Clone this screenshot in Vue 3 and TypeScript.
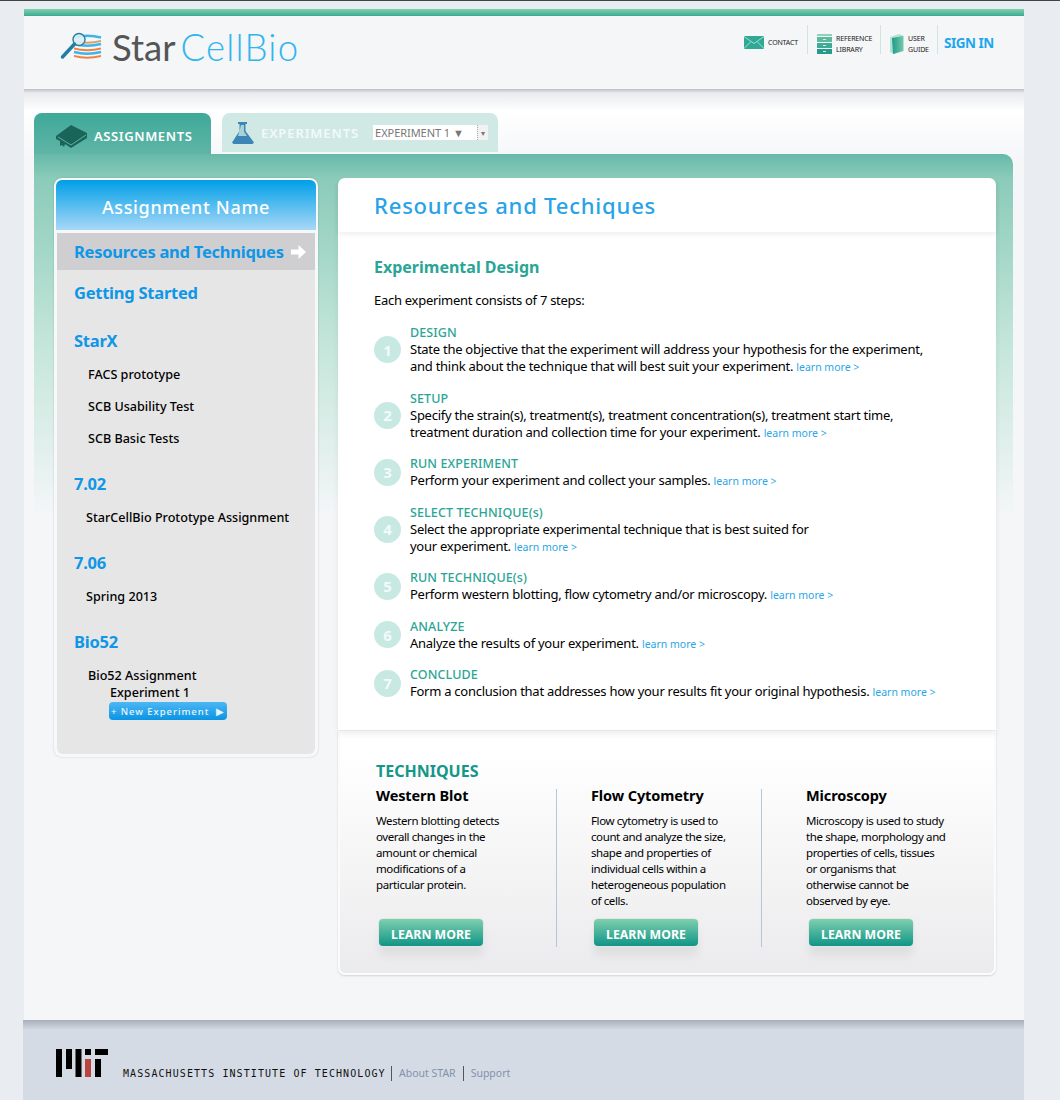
<script setup lang="ts">
type Step = { title: string; lines: string[]; }
type Technique = { name: string; text: string[] }

const steps: Step[] = [
	{ title: 'DESIGN', lines: ['State the objective that the experiment will address your hypothesis for the experiment,', 'and think about the technique that will best suit your experiment.'] },
	{ title: 'SETUP', lines: ['Specify the strain(s), treatment(s), treatment concentration(s), treatment start time,', 'treatment duration and collection time for your experiment.'] },
	{ title: 'RUN EXPERIMENT', lines: ['Perform your experiment and collect your samples.'] },
	{ title: 'SELECT TECHNIQUE(s)', lines: ['Select the appropriate experimental technique that is best suited for', 'your experiment.'] },
	{ title: 'RUN TECHNIQUE(s)', lines: ['Perform western blotting, flow cytometry and/or microscopy.'] },
	{ title: 'ANALYZE', lines: ['Analyze the results of your experiment.'] },
	{ title: 'CONCLUDE', lines: ['Form a conclusion that addresses how your results fit your original hypothesis.'] },
]

const techniques: Technique[] = [
	{ name: 'Western Blot', text: ['Western blotting detects', 'overall changes in the', 'amount or chemical', 'modifications of a', 'particular protein.'] },
	{ name: 'Flow Cytometry', text: ['Flow cytometry is used to', 'count and analyze the size,', 'shape and properties of', 'individual cells within a', 'heterogeneous population', 'of cells.'] },
	{ name: 'Microscopy', text: ['Microscopy is used to study', 'the shape, morphology and', 'properties of cells, tissues', 'or organisms that', 'otherwise cannot be', 'observed by eye.'] },
]
</script>

<template>
	<div class="topline"></div>
	<div class="page">
		<div class="greenbar"></div>
		<header class="header">
			<div class="logo">
				<svg class="logo-icon" width="42" height="30" viewBox="0 0 42 30">
					<g fill="none" stroke-width="2.4">
						<path d="M14 5.500Q27 2 41 5.500" stroke="#3fb4e8" />
						<path d="M14 8q13 3.500 27 0v2q-14 3.500-27 0Z" fill="#d8a06c" stroke="none" />
						<path d="M14 12q13 3.500 27 0" stroke="#3fb4e8" />
						<path d="M14 15.500q13 3.500 27 0v2q-14 3.500-27 0Z" fill="#ee8440" stroke="none" />
						<path d="M14 20q13 3.500 27 0" stroke="#3fb4e8" />
						<path d="M14 23q13 3.500 27 0v2q-14 3.500-27 0Z" fill="#ee8440" stroke="none" />
					</g>
					<circle cx="19" cy="7.500" r="6" fill="#dcf0f6" fill-opacity=".9" stroke="#2b7f9e" stroke-width="1.400" />
					<path d="M14.500 12 2.500 25" stroke="#1f7ea3" stroke-width="3.400" stroke-linecap="round" />
				</svg>
				<span class="logo-star">Star</span><span class="logo-cell">CellBio</span>
			</div>
			<nav class="topnav">
				<a class="navitem contact">
					<svg width="20" height="13" viewBox="0 0 20 13">
						<rect width="20" height="13" rx="1" fill="#2fa896" />
						<path d="M0 0.500 10 7.500 20 0.500M0 12.500 7 5.500M20 12.500 13 5.500" fill="none" stroke="#a8dccb" stroke-width="1" />
					</svg>
					<span>CONTACT</span>
				</a>
				<a class="navitem reference">
					<svg width="15" height="20" viewBox="0 0 15 20">
						<rect y="0" width="15" height="2" fill="#8fd0b8" />
						<rect y="3" width="15" height="5" fill="#5cba9f" />
						<rect y="9" width="15" height="5" fill="#3dab95" />
						<rect y="15" width="15" height="5" fill="#249c8b" />
						<path d="M6 5.500h3M6 11.500h3M6 17.500h3" stroke="#d4eee4" stroke-width="1" />
					</svg>
					<span>REFERENCE<br />LIBRARY</span>
				</a>
				<a class="navitem guide">
					<svg width="14" height="20" viewBox="0 0 14 20">
						<defs>
							<linearGradient id="cover" x1="0" y1="0" x2="1" y2="0">
								<stop offset="0" stop-color="#1f9a88" />
								<stop offset="1" stop-color="#72c7ab" />
							</linearGradient>
						</defs>
						<path d="M0 3 9 0 14 2V17L4 20 0 18Z" fill="#b4e2d2" />
						<path d="M2 4 13 2V17L3 20Z" fill="url(#cover)" />
					</svg>
					<span>USER<br />GUIDE</span>
				</a>
				<a class="signin">SIGN IN</a>
			</nav>
		</header>

		<main class="content">
			<div class="tabs">
				<div class="tab tab-active">
					<svg width="32" height="24" viewBox="0 0 32 24">
						<path d="M0 12 15 1 31 9V14L15 24 9 20 8 23 6 21 4 22V17L0 15Z" fill="#1b6459" />
						<path d="M2 13 15 21 30 11" fill="none" stroke="#5fb0a2" stroke-width="1" />
					</svg>
					<span>ASSIGNMENTS</span>
				</div>
				<div class="tab tab-other">
					<svg width="22" height="22" viewBox="0 0 22 22">
						<path d="M6 0h9v2h-1.500v7L22 20.500 20.500 22H1.500L0 20.500 7.500 9V2H6Z" fill="#3b86b5" />
						<path d="M9 3h3v6.500L15 14H6Z" fill="#d0e9e4" opacity=".75" />
					</svg>
					<span class="tab-label">EXPERIMENTS</span>
					<div class="picker">
						<span class="picker-value">EXPERIMENT 1 ▼</span>
						<span class="picker-arrow">▾</span>
					</div>
				</div>
			</div>

			<div class="panel">
				<aside class="sidebar">
					<div class="side-head">Assignment Name</div>
					<div class="side-body">
						<div class="side-active">
							<span>Resources and Techniques</span>
							<svg width="15" height="14" viewBox="0 0 15 14"><path d="M0 4.500H7.500V0L15 7 7.500 14V9.500H0Z" fill="#fff" /></svg>
						</div>
						<div class="side-link first">Getting Started</div>
						<div class="side-link">StarX</div>
						<div class="side-sub">FACS prototype</div>
						<div class="side-sub">SCB Usability Test</div>
						<div class="side-sub">SCB Basic Tests</div>
						<div class="side-link">7.02</div>
						<div class="side-sub tight">StarCellBio Prototype Assignment</div>
						<div class="side-link">7.06</div>
						<div class="side-sub tight">Spring 2013</div>
						<div class="side-link">Bio52</div>
						<div class="side-sub">Bio52 Assignment</div>
						<div class="side-exp">Experiment 1</div>
						<button class="new-exp">+ New Experiment &nbsp;▶</button>
					</div>
				</aside>

				<section class="main">
					<div class="card">
						<h1 class="card-title">Resources and Techiques</h1>
						<div class="card-body">
							<h2 class="design">Experimental Design</h2>
							<p class="intro">Each experiment consists of 7 steps:</p>
							<div class="steps">
								<div v-for="(step, idx) in steps" :key="idx" class="step">
									<div class="num">{{ idx + 1 }}</div>
									<div class="step-text">
										<div class="step-title">{{ step.title }}</div>
										<div v-for="(line, i) in step.lines" :key="i">
											{{ line }}
											<a v-if="i === step.lines.length - 1" class="more">learn more &gt;</a>
										</div>
									</div>
								</div>
							</div>
						</div>
					</div>

					<div class="tech">
						<h2 class="tech-title">TECHNIQUES</h2>
						<div class="tech-cols">
							<div v-for="t in techniques" :key="t.name" class="tech-col">
								<h3>{{ t.name }}</h3>
								<p><template v-for="line in t.text" :key="line">{{ line }}<br /></template></p>
								<button class="learn">LEARN MORE</button>
							</div>
						</div>
					</div>
				</section>
			</div>
		</main>

		<footer class="footer">
			<svg width="53" height="28" viewBox="0 0 53 28">
				<rect x="0" width="6" height="28" />
				<rect x="10" width="6" height="20" />
				<rect x="19.500" width="6" height="28" />
				<rect x="29" width="6" height="6" />
				<rect x="29" y="10" width="6" height="18" fill="#b8453f" />
				<rect x="39" width="13" height="6" />
				<rect x="39" y="10" width="6" height="18" />
			</svg>
			<span class="mit">MASSACHUSETTS INSTITUTE OF TECHNOLOGY</span>
			<a class="foot-link">About STAR</a>
			<a class="foot-link">Support</a>
		</footer>
	</div>
</template>

<style>
html,
body {
	margin: 0;
	background: #e9ecf1;
}
</style>

<style scoped>
.topline {
	height: 1px;
	background: #444;
}

.page {
	width: 1000px;
	margin: 8px 0 0 24px;
	font-family: 'Noto Sans', sans-serif;
	color: #000;
}

.greenbar {
	height: 7px;
	background: linear-gradient(#82d0b0, #3aa98f);
}

.header {
	display: flex;
	justify-content: space-between;
	height: 73px;
	background: #f4f6f8;
}

.logo {
	display: flex;
	align-items: center;
	padding: 0 0 11px 36px;
	font-family: Lato, sans-serif;
	font-size: 36.500px;
}

.logo-icon {
	margin-right: 10px;
}

.logo-star {
	color: #555;
	margin-right: 5px;
}

.logo-cell {
	color: #2fb5ee;
	font-weight: 300;
	letter-spacing: 1.2px;
}

.topnav {
	display: flex;
	align-items: flex-start;
	padding: 9px 31px 0 0;
}

.navitem {
	display: flex;
	align-items: center;
	gap: 4px;
	height: 29px;
	box-sizing: border-box;
	padding-top: 9px;
	font-size: 7px;
	line-height: 11px;
	letter-spacing: -0.15px;
	color: #222;
	border-right: 1px solid #cfe5df;
}

.contact {
	width: 64px;
	padding-top: 5px;
}

.reference {
	width: 73px;
	padding-left: 9px;
}

.guide {
	width: 57px;
	padding-left: 9px;
}

.signin {
	width: 49px;
	margin: 9px 0 0 6px;
	font-size: 13.500px;
	font-weight: 700;
	letter-spacing: -0.5px;
	white-space: nowrap;
	color: #1ea7ee;
}

.content {
	height: 931px;
	padding: 24px 11px 0 10px;
	box-sizing: border-box;
	background: linear-gradient(#bcc0c6, #e9ebee 4px, #fff 22px, #f9fafb 50px, #f4f6f8 70px);
}

.tabs {
	display: flex;
	align-items: flex-start;
	gap: 11px;
	height: 41px;
}

.tab {
	display: flex;
	align-items: center;
	border-radius: 8px 8px 0 0;
	letter-spacing: 0.9px;
	color: #fff;
	font-size: 13px;
	font-weight: 600;
}

.tab-active {
	width: 177px;
	height: 41px;
	box-sizing: border-box;
	padding: 5px 0 0 22px;
	gap: 6px;
	letter-spacing: 0.6px;
	background: linear-gradient(#3ea99a, #5fb5a5);
}

.tab-other {
	width: 276px;
	height: 39px;
	box-sizing: border-box;
	padding-left: 10px;
	background: #d0e9e4;
	color: #f2faf8;
}

.tab-label {
	margin-left: 7px;
}

.picker {
	display: flex;
	justify-content: space-between;
	width: 115px;
	height: 15px;
	margin-left: 14px;
	background: #fff;
	font-size: 11px;
	font-weight: 400;
	letter-spacing: -0.05px;
	line-height: 15px;
	color: #777;
}

.picker-value {
	padding-left: 2px;
}

.picker-arrow {
	width: 10px;
	text-align: center;
	border-left: 1px dotted #aaa;
	background: #f2f2f2;
	font-size: 8px;
}

.panel {
	display: flex;
	align-items: flex-start;
	gap: 20px;
	width: 979px;
	padding: 24px 17px 0 20px;
	box-sizing: border-box;
	border-radius: 0 10px 0 0;
	background: linear-gradient(#66b9a9, #8bcbb9 24px, #c4e6da 190px, #f4f6f8 360px) no-repeat;
	background-size: 100% 360px;
}

.sidebar {
	width: 264px;
	height: 579px;
	box-sizing: border-box;
	padding: 2px 3px 3px;
	display: flex;
	flex-direction: column;
	border-radius: 8px;
	background: #f7f8f9;
	box-shadow: 0 0 2px rgba(0, 0, 0, 0.2);
}

.side-head {
	height: 50px;
	margin: 0 -1px;
	border-radius: 6px 6px 0 0;
	background: linear-gradient(#009fe8, #a8d8f7);
	color: #fff;
	font-size: 18px;
	font-weight: 500;
	letter-spacing: 0.65px;
	line-height: 55px;
	text-align: center;
}

.side-body {
	flex: 1;
	margin-top: 3px;
	border-radius: 0 0 6px 6px;
	background: #e6e6e6;
}

.side-active {
	display: flex;
	align-items: center;
	gap: 7px;
	height: 37px;
	padding-left: 17px;
	background: #cfcfd1;
	font-size: 16.500px;
	font-weight: 700;
	letter-spacing: -0.25px;
	color: #0f96e6;
}

.side-link {
	margin: 21.500px 0 0 17px;
	font-size: 16.500px;
	font-weight: 700;
	letter-spacing: -0.25px;
	line-height: 26px;
	color: #0f96e6;
}

.side-link.first {
	margin: 10px 0 0 17px;
}

.side-sub {
	margin: 11px 0 0 31px;
	font-size: 12.600px;
	font-weight: 500;
	line-height: 21px;
}

.side-link + .side-sub {
	margin-top: 10.500px;
}

.side-sub.tight {
	margin: 10.500px 0 1px 29px;
}

.side-exp {
	margin: -4px 0 0 53px;
	font-size: 12.600px;
	font-weight: 500;
	line-height: 21px;
}

.new-exp {
	display: block;
	width: 118px;
	height: 18px;
	margin: -1px 0 0 52px;
	padding: 0;
	border: 0;
	border-radius: 4px;
	background: linear-gradient(#4db7f3, #0a94e4);
	color: #e6f5fd;
	font-family: inherit;
	font-size: 9.500px;
	font-weight: 500;
	letter-spacing: 0.95px;
}

.main {
	width: 658px;
}

.card {
	height: 552px;
	border-radius: 7px 7px 0 0;
	background: #fff;
	box-shadow: 0 4px 6px rgba(0, 0, 0, 0.07);
	position: relative;
}

.card-title {
	height: 54px;
	margin: 0;
	padding-left: 36px;
	font-size: 22px;
	font-weight: 500;
	letter-spacing: 0.8px;
	line-height: 54px;
	color: #28a3e8;
	box-shadow: 0 3px 5px rgba(0, 0, 0, 0.06);
}

.card-body {
	padding: 24px 0 0 36px;
}

.design {
	margin: 0;
	font-size: 16px;
	font-weight: 700;
	line-height: 22px;
	color: #2aa595;
}

.intro {
	margin: 11px 0 0;
	font-size: 13px;
	line-height: 22px;
	letter-spacing: -0.28px;
}

.steps {
	display: flex;
	flex-direction: column;
	gap: 14.500px;
	margin-top: 13px;
}

.step {
	display: flex;
	align-items: center;
	gap: 9px;
}

.num {
	display: flex;
	align-items: center;
	justify-content: center;
	width: 27px;
	height: 27px;
	border-radius: 50%;
	background: #c8e8e2;
	color: #f3fbf9;
	font-size: 15px;
	font-weight: 700;
}

.step-text {
	font-size: 13px;
	line-height: 17px;
	letter-spacing: -0.26px;
}

.step-title {
	font-size: 12.500px;
	font-weight: 500;
	color: #2aa595;
	letter-spacing: 0.1px;
}

.more {
	font-size: 10.500px;
	line-height: 1;
	letter-spacing: 0;
	color: #29a6e6;
}

.tech {
	height: 244px;
	box-sizing: border-box;
	margin-top: 1px;
	padding: 28px 0 0 36px;
	border: solid #fafbfc;
	border-width: 0 2px 2px;
	border-radius: 0 0 7px 7px;
	background: linear-gradient(#fff, #fff 20px, #ebebed);
	box-shadow: 0 1px 2px rgba(0, 0, 0, 0.15);
}

.tech-title {
	margin: 0;
	font-size: 16px;
	font-weight: 700;
	line-height: 24px;
	color: #14968a;
}

.tech-cols {
	display: flex;
	margin-top: 6px;
}

.tech-col {
	position: relative;
	flex: none;
	width: 215px;
	height: 158px;
	box-sizing: border-box;
}

.tech-col::after {
	content: '';
	position: absolute;
	top: 0;
	right: 34px;
	bottom: 0;
	width: 1px;
	background: #b4c6de;
}

.tech-col:nth-child(2)::after {
	right: 44px;
}

.tech-col:last-child::after {
	display: none;
}

.tech-col h3 {
	margin: -2px 0 0;
	font-size: 14.500px;
	font-weight: 700;
	line-height: 16px;
	letter-spacing: -0.1px;
}

.tech-col p {
	margin: 10px 0 0;
	font-size: 11.500px;
	line-height: 16px;
	letter-spacing: -0.4px;
}

.learn {
	position: absolute;
	left: 3px;
	top: 130px;
	width: 104px;
	height: 27px;
	padding: 3px 0 0;
	border: 0;
	border-radius: 4px;
	background: linear-gradient(#7fcfae, #0f9587);
	color: #fff;
	font-family: inherit;
	font-size: 12.300px;
	font-weight: 700;
	box-shadow: 0 0 0 1px #e4e6e6, 0 10px 10px rgba(0, 0, 0, 0.06);
}

.footer {
	display: flex;
	align-items: flex-end;
	height: 80px;
	margin-left: -1px;
	padding: 0 0 23px 33px;
	box-sizing: border-box;
	background: linear-gradient(#a9afba, #d4dbe5 10px);
	font-size: 10.500px;
}

.mit {
	width: 262px;
	margin: 0 6px -2px 14px;
	font-family: 'DejaVu Sans Mono', monospace;
	font-size: 10px;
	letter-spacing: 1.08px;
	line-height: 11px;
	white-space: nowrap;
	color: #111;
}

.foot-link {
	padding-left: 7px;
	margin: 0 7px -4px 0;
	border-left: 1px solid #555;
	line-height: 15px;
	color: #8391ad;
}
</style>
